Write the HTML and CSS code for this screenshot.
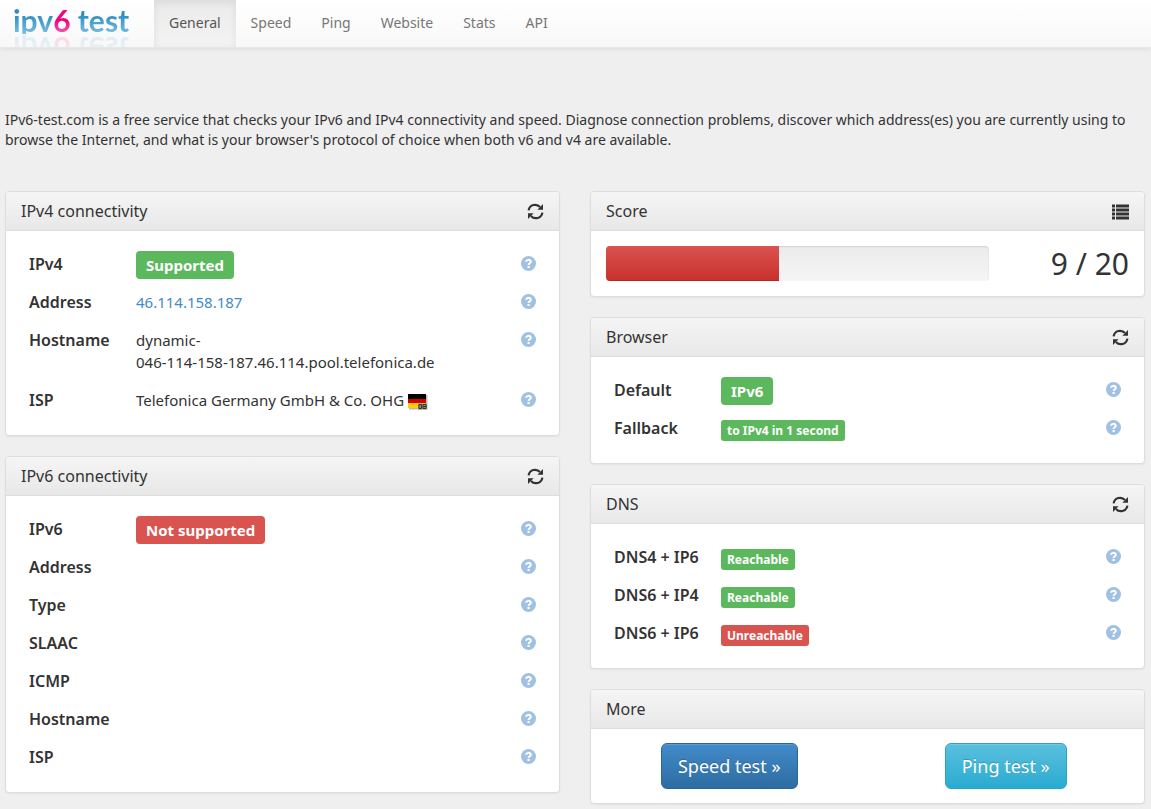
FILE: index.html
```html
<!DOCTYPE html>
<html lang="en">
<head>
    <meta charset="UTF-8">
    <meta name="viewport" content="width=device-width, initial-scale=1.0">
    <title>IPv6 test</title>
    <link rel="stylesheet" href="styles.css">
</head>
<body>
    <!-- shared icons -->
    <svg class="sprite" aria-hidden="true">
        <symbol id="refresh" viewBox="0 0 17 17">
            <path d="M1.6 7.4C2.6 1.4 9.6.2 13 4M15.4 9.6C14.4 15.6 7.4 16.8 4 13" fill="none" stroke="currentColor" stroke-width="2.2"/>
            <path d="M16 1v5.8h-5.6zM1 16v-5.8h5.6z" fill="currentColor"/>
        </symbol>
        <symbol id="list" viewBox="0 0 17 16">
            <path d="M0 1h3v3H0zM4 1h13v3H4zM0 5h3v3H0zM4 5h13v3H4zM0 9h3v3H0zM4 9h13v3H4zM0 13h3v3H0zM4 13h13v3H4z" fill="currentColor"/>
        </symbol>
        <symbol id="help" viewBox="0 0 15 15">
            <circle cx="7.5" cy="7.5" r="7.5" fill="#a0c1e2"/>
            <path d="M5.2 5.8C5.2 3.3 9.8 3.2 9.8 5.7C9.8 7.3 7.6 7.2 7.6 9" fill="none" stroke="#fff" stroke-width="2"/>
            <path d="M6.5 10h2.2v2H6.5z" fill="#fff"/>
        </symbol>
    </svg>

    <header class="navbar">
        <a class="brand" href="#"><span class="blue">ipv</span><span class="pink">6</span><span class="blue"> test</span></a>
        <nav>
            <a class="active" href="#">General</a>
            <a href="#">Speed</a>
            <a href="#">Ping</a>
            <a href="#">Website</a>
            <a href="#">Stats</a>
            <a href="#">API</a>
        </nav>
    </header>

    <main>
        <p class="intro">IPv6-test.com is a free service that checks your IPv6 and IPv4 connectivity and speed. Diagnose connection problems, discover which address(es) you are currently using to browse the Internet, and what is your browser's protocol of choice when both v6 and v4 are available.</p>

        <div class="columns">
            <div class="column">
                <section class="panel">
                    <div class="panel-heading">
                        <h3>IPv4 connectivity</h3>
                        <button type="button" aria-label="Refresh"><svg><use href="#refresh"/></svg></button>
                    </div>
                    <div class="panel-body">
                        <table>
                            <tr><th scope="row">IPv4</th><td><span class="label label-big success">Supported</span></td><td class="help"><a href="#" aria-label="Help"><svg><use href="#help"/></svg></a></td></tr>
                            <tr><th scope="row">Address</th><td><a href="#">46.114.158.187</a></td><td class="help"><a href="#" aria-label="Help"><svg><use href="#help"/></svg></a></td></tr>
                            <tr><th scope="row">Hostname</th><td>dynamic-<br>046-114-158-187.46.114.pool.telefonica.de</td><td class="help"><a href="#" aria-label="Help"><svg><use href="#help"/></svg></a></td></tr>
                            <tr>
                                <th scope="row">ISP</th>
                                <td>Telefonica Germany GmbH &amp; Co. OHG
                                    <svg class="flag" viewBox="0 0 20 16" role="img" aria-label="Germany">
                                        <path d="M1 1h18.5v14.5H1z" fill="#bbb"/>
                                        <path d="M0 0h18v5H0z" fill="#000"/>
                                        <path d="M0 5h18v4H0z" fill="#d40000"/>
                                        <path d="M0 9h18v5H0z" fill="#ffce00"/>
                                        <path d="M10 9.5h9v6h-9z" fill="#9a9577"/>
                                        <path d="M11 10.5h2.5v4H11zM15 10.5h3v4h-3z" fill="none" stroke="#333"/>
                                        <path d="M15 12.5h3" stroke="#333"/>
                                    </svg>
                                </td>
                                <td class="help"><a href="#" aria-label="Help"><svg><use href="#help"/></svg></a></td>
                            </tr>
                        </table>
                    </div>
                </section>

                <section class="panel">
                    <div class="panel-heading">
                        <h3>IPv6 connectivity</h3>
                        <button type="button" aria-label="Refresh"><svg><use href="#refresh"/></svg></button>
                    </div>
                    <div class="panel-body">
                        <table>
                            <tr><th scope="row">IPv6</th><td><span class="label label-big danger">Not supported</span></td><td class="help"><a href="#" aria-label="Help"><svg><use href="#help"/></svg></a></td></tr>
                            <tr><th scope="row">Address</th><td></td><td class="help"><a href="#" aria-label="Help"><svg><use href="#help"/></svg></a></td></tr>
                            <tr><th scope="row">Type</th><td></td><td class="help"><a href="#" aria-label="Help"><svg><use href="#help"/></svg></a></td></tr>
                            <tr><th scope="row">SLAAC</th><td></td><td class="help"><a href="#" aria-label="Help"><svg><use href="#help"/></svg></a></td></tr>
                            <tr><th scope="row">ICMP</th><td></td><td class="help"><a href="#" aria-label="Help"><svg><use href="#help"/></svg></a></td></tr>
                            <tr><th scope="row">Hostname</th><td></td><td class="help"><a href="#" aria-label="Help"><svg><use href="#help"/></svg></a></td></tr>
                            <tr><th scope="row">ISP</th><td></td><td class="help"><a href="#" aria-label="Help"><svg><use href="#help"/></svg></a></td></tr>
                        </table>
                    </div>
                </section>
            </div>

            <div class="column">
                <section class="panel">
                    <div class="panel-heading">
                        <h3>Score</h3>
                        <button type="button" aria-label="Details"><svg><use href="#list"/></svg></button>
                    </div>
                    <div class="panel-body score">
                        <div class="progress"><div class="bar" style="width: 45%"></div></div>
                        <div class="points">9 / 20</div>
                    </div>
                </section>

                <section class="panel">
                    <div class="panel-heading">
                        <h3>Browser</h3>
                        <button type="button" aria-label="Refresh"><svg><use href="#refresh"/></svg></button>
                    </div>
                    <div class="panel-body">
                        <table>
                            <tr><th scope="row">Default</th><td><span class="label label-big success">IPv6</span></td><td class="help"><a href="#" aria-label="Help"><svg><use href="#help"/></svg></a></td></tr>
                            <tr><th scope="row">Fallback</th><td><span class="label success">to IPv4 in 1 second</span></td><td class="help"><a href="#" aria-label="Help"><svg><use href="#help"/></svg></a></td></tr>
                        </table>
                    </div>
                </section>

                <section class="panel">
                    <div class="panel-heading">
                        <h3>DNS</h3>
                        <button type="button" aria-label="Refresh"><svg><use href="#refresh"/></svg></button>
                    </div>
                    <div class="panel-body">
                        <table>
                            <tr><th scope="row">DNS4 + IP6</th><td><span class="label success">Reachable</span></td><td class="help"><a href="#" aria-label="Help"><svg><use href="#help"/></svg></a></td></tr>
                            <tr><th scope="row">DNS6 + IP4</th><td><span class="label success">Reachable</span></td><td class="help"><a href="#" aria-label="Help"><svg><use href="#help"/></svg></a></td></tr>
                            <tr><th scope="row">DNS6 + IP6</th><td><span class="label danger">Unreachable</span></td><td class="help"><a href="#" aria-label="Help"><svg><use href="#help"/></svg></a></td></tr>
                        </table>
                    </div>
                </section>

                <section class="panel">
                    <div class="panel-heading">
                        <h3>More</h3>
                    </div>
                    <div class="panel-body more">
                        <a class="btn btn-primary" href="#">Speed test »</a>
                        <a class="btn btn-info" href="#">Ping test »</a>
                    </div>
                </section>
            </div>
        </div>
    </main>
</body>
</html>
```

FILE: styles.css
```css
* {
    box-sizing: border-box;
}
body {
    margin: 0;
    background-color: #efefef;
    color: #333;
    font-family: "Noto Sans", sans-serif;
    font-size: 14px;
    line-height: 20px;
}
a {
    color: #428bca;
    text-decoration: none;
}
.sprite {
    display: none;
}

/* top bar */
.navbar {
    display: flex;
    height: 48px;
    overflow: hidden;
    background: linear-gradient(#fff, #f8f8f8);
    border-bottom: 1px solid #e7e7e7;
    box-shadow: 0 1px 5px rgba(0, 0, 0, 0.08);
}
.brand {
    width: 154px;
    padding-left: 13px;
    font-family: Lato, sans-serif;
    font-size: 30px;
    font-weight: bold;
    line-height: 40px;
    white-space: pre;
}
.brand span {
    display: inline-block;
    height: 34px;
    color: transparent;
    background-clip: text;
    -webkit-background-clip: text;
    -webkit-box-reflect: below 1px linear-gradient(transparent 40%, rgba(0, 0, 0, 0.2));
}
.blue {
    background-image: linear-gradient(#2b8fc4 45%, #7cbfe0);
}
.pink {
    background-image: linear-gradient(#f0047f 60%, #f560b0);
}
nav {
    display: flex;
}
nav a {
    padding: 13px 15px 15px;
    color: #777;
}
nav .active {
    color: #555;
    background: linear-gradient(#ebebeb, #f3f3f3);
    box-shadow: inset 0 3px 9px rgba(0, 0, 0, 0.075);
}

main {
    padding: 62px 6px 0 5px;
}
.intro {
    margin: 0 0 41px;
}
.columns {
    display: grid;
    grid-template-columns: 1fr 1fr;
    gap: 30px;
}

/* panels */
.panel {
    margin-bottom: 20px;
    background-color: #fff;
    border: 1px solid #ddd;
    border-radius: 4px;
    box-shadow: 0 1px 2px rgba(0, 0, 0, 0.05);
}
.panel-heading {
    display: flex;
    justify-content: space-between;
    align-items: center;
    height: 39px;
    padding: 0 15px;
    background: linear-gradient(#f5f5f5, #e8e8e8);
    border-bottom: 1px solid #ddd;
    border-radius: 3px 3px 0 0;
}
.panel-heading h3 {
    margin: 0;
    font-size: 16px;
    font-weight: normal;
}
.panel-heading button {
    display: flex;
    padding: 0;
    color: #333;
    background: none;
    border: none;
    cursor: pointer;
}
.panel-heading svg {
    width: 17px;
    height: 17px;
}
.panel-body {
    padding: 15px;
}

table {
    width: 100%;
    table-layout: fixed;
    border-collapse: collapse;
    font-size: 15px;
    line-height: 22px;
}
th, td {
    height: 38px;
    padding: 7px 8px 9px;
    text-align: left;
    vertical-align: top;
}
th {
    width: 107px;
    font-size: 16px;
    font-weight: 600;
    white-space: nowrap;
}
.help {
    width: 40px;
}
.help svg {
    display: block;
    width: 15px;
    height: 15px;
    margin: 3px 0 0 auto;
}
.flag {
    width: 20px;
    height: 16px;
    vertical-align: -4px;
}

.label {
    display: inline-block;
    margin: 3px 0 -2px;
    padding: 0 6px;
    color: #fff;
    font-size: 12px;
    font-weight: bold;
    line-height: 21px;
    vertical-align: top;
    border-radius: 3px;
}
.label-big {
    margin: -2px 0 -4px;
    padding: 0 10px;
    font-size: 15px;
    line-height: 28px;
    border-radius: 4px;
}
.success {
    background-color: #5cb85c;
}
.danger {
    background-color: #d9534f;
}

/* score */
.score {
    display: grid;
    grid-template-columns: 7fr 2fr;
    gap: 30px;
}
.progress {
    height: 35px;
    overflow: hidden;
    background: linear-gradient(#ebebeb, #f5f5f5);
    border-radius: 4px;
    box-shadow: inset 0 1px 2px rgba(0, 0, 0, 0.1);
}
.bar {
    height: 100%;
    background: linear-gradient(#d9534f, #c9302c);
    box-shadow: inset 0 -1px 0 rgba(0, 0, 0, 0.15);
}
.points {
    font-size: 30px;
    line-height: 35px;
    text-align: right;
}

/* buttons */
.more {
    display: grid;
    grid-template-columns: 1fr 1fr;
    justify-items: center;
    padding: 14px 0;
}
.btn {
    padding: 10px 16px;
    color: #fff;
    font-size: 18px;
    line-height: 24px;
    border: 1px solid;
    border-radius: 6px;
    text-shadow: 0 -1px 0 rgba(0, 0, 0, 0.2);
    box-shadow: inset 0 1px 0 rgba(255, 255, 255, 0.15);
}
.btn-primary {
    background: linear-gradient(#428bca, #2d6ca2);
    border-color: #2b669a;
}
.btn-info {
    background: linear-gradient(#5bc0de, #2aabd2);
    border-color: #28a4c9;
}
```
